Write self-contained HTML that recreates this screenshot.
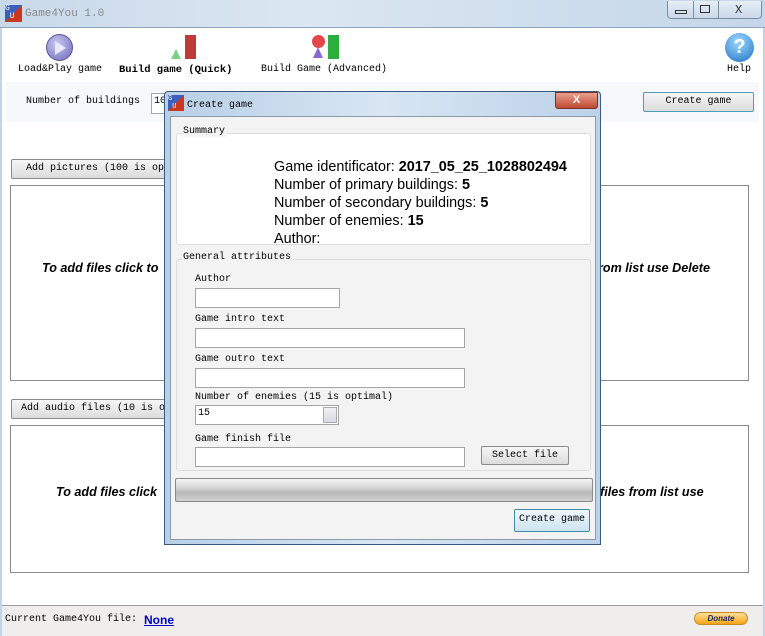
<!DOCTYPE html><html><head><style>
*{margin:0;padding:0;box-sizing:border-box}
body{width:765px;height:636px;position:relative;overflow:hidden;background:#fff;font-family:"Liberation Mono","Noto Sans CJK SC",monospace;font-size:10px;color:#000}
.a{position:absolute}
.btn{position:absolute;border:1px solid #8a8a8a;border-radius:2px;background:linear-gradient(#f6f6f6,#dcdcdc);text-align:center;line-height:18px}
.inp{position:absolute;background:#fff;border:1px solid #a5a5a5}
.it{font-family:"Liberation Sans",sans-serif;font-style:italic;font-weight:bold;font-size:12.6px}
.s{font-family:"Liberation Sans",sans-serif;font-size:14.4px;line-height:18px}
</style></head><body>
<div class="a" style="left:0;top:0;width:765px;height:28px;background:linear-gradient(90deg,#c9d9ea,#dbe7f2 40%,#c4d6e9);border-bottom:1px solid #8ea4bd"></div>
<div class="a" style="left:5px;top:5px;width:17px;height:17px;background:linear-gradient(135deg,#3a5fc0 50%,#c83a20 50%);color:#fff;font-size:8px;line-height:8px">G<br>&nbsp;U</div>
<div class="a" style="left:25px;top:8px;color:#8a8a8a;font-size:11px">Game4You 1.0</div>
<div class="a" style="left:667px;top:1px;width:95px;height:18px;border:1px solid #7b8ea4;border-top:none;border-radius:0 0 4px 4px;background:linear-gradient(#e6eef6,#c9d8e8)"></div>
<div class="a" style="left:693px;top:1px;width:1px;height:18px;background:#7b8ea4"></div>
<div class="a" style="left:718px;top:1px;width:1px;height:18px;background:#7b8ea4"></div>
<div class="a" style="left:675px;top:10px;width:12px;height:4px;border:1px solid #333"></div>
<div class="a" style="left:700px;top:5px;width:10px;height:8px;border:1px solid #333"></div>
<div class="a" style="left:735px;top:3px;font-size:12px;color:#333">X</div>
<div class="a" style="left:0;top:28px;width:2px;height:608px;background:#c4d4e6"></div>
<div class="a" style="left:763px;top:28px;width:2px;height:608px;background:#c4d4e6"></div>
<div class="a" style="left:46px;top:34px;width:27px;height:27px;border-radius:50%;background:radial-gradient(circle at 40% 35%,#c8c8f0,#6a6ab8);border:1px solid #5a5aa0"></div>
<div class="a" style="left:55px;top:41px;width:0;height:0;border-left:11px solid #e8e8ff;border-top:7px solid transparent;border-bottom:7px solid transparent"></div>
<div class="a" style="left:18px;top:64px">Load&amp;Play game</div>
<div class="a" style="left:171px;top:49px;width:0;height:0;border-left:5px solid transparent;border-right:5px solid transparent;border-bottom:10px solid #7dd08a"></div>
<div class="a" style="left:185px;top:35px;width:11px;height:24px;background:#c03a3a"></div>
<div class="a" style="left:119px;top:64px;font-weight:bold;font-size:10.5px">Build game (Quick)</div>
<div class="a" style="left:312px;top:35px;width:13px;height:13px;border-radius:50%;background:#e34848"></div>
<div class="a" style="left:313px;top:47px;width:0;height:0;border-left:5px solid transparent;border-right:5px solid transparent;border-bottom:11px solid #8a6ad0"></div>
<div class="a" style="left:328px;top:35px;width:11px;height:24px;background:#2cae3c"></div>
<div class="a" style="left:261px;top:64px">Build Game (Advanced)</div>
<div class="a" style="left:725px;top:33px;width:29px;height:29px;border-radius:50%;background:radial-gradient(circle at 45% 30%,#9fd8ff,#1d72c4);color:#fff;font:bold 20px 'Liberation Sans',sans-serif;text-align:center;line-height:29px">?</div>
<div class="a" style="left:727px;top:64px">Help</div>
<div class="a" style="left:6px;top:82px;width:753px;height:40px;background:#f6f8fb"></div>
<div class="a" style="left:26px;top:96px">Number of buildings</div>
<div class="inp" style="left:151px;top:93px;width:20px;height:21px;padding:2px">10</div>
<div class="btn" style="left:643px;top:92px;width:111px;height:20px;border-color:#4aa0b8">Create game</div>
<div class="btn" style="left:11px;top:159px;width:160px;height:20px;text-align:left;padding-left:14px">Add pictures (100 is op</div>
<div class="a" style="left:10px;top:185px;width:739px;height:196px;border:1px solid #8a8a8a"></div>
<div class="a it" style="left:42px;top:261px">To add files click to</div>
<div class="a it" style="left:598px;top:261px">rom list use Delete</div>
<div class="btn" style="left:11px;top:399px;width:160px;height:20px;text-align:left;padding-left:9px">Add audio files (10 is o</div>
<div class="a" style="left:10px;top:425px;width:739px;height:148px;border:1px solid #8a8a8a"></div>
<div class="a it" style="left:56px;top:485px">To add files click</div>
<div class="a it" style="left:600px;top:485px">files from list use</div>
<div class="a" style="left:2px;top:605px;width:761px;height:31px;background:#f0eeec;border-top:1px solid #9a9a9a"></div>
<div class="a" style="left:5px;top:614px">Current Game4You file:</div>
<div class="a" style="left:144px;top:613px;color:#0000cc;font:bold 12px 'Liberation Sans',sans-serif;text-decoration:underline">None</div>
<div class="a" style="left:694px;top:612px;width:54px;height:13px;border-radius:7px;background:linear-gradient(#ffe09a,#f7a417);border:1px solid #c98a20;font:bold italic 8px 'Liberation Sans',sans-serif;text-align:center;line-height:11px;color:#1a2a6a">Donate</div>
<div class="a" style="left:164px;top:91px;width:437px;height:454px;border:1px solid #3a5a80;background:linear-gradient(90deg,#b8cfe6,#d8e6f3 50%,#bcd2e8);border-radius:4px 4px 0 0"></div>
<div class="a" style="left:168px;top:95px;width:16px;height:16px;background:linear-gradient(135deg,#3a5fc0 50%,#c83a20 50%);color:#fff;font-size:7px;line-height:8px">G<br>&nbsp;U</div>
<div class="a" style="left:187px;top:100px">Create game</div>
<div class="a" style="left:555px;top:92px;width:43px;height:17px;border:1px solid #7a3030;border-radius:0 0 3px 3px;background:linear-gradient(#e8a090,#c04a30);color:#fff;text-align:center;font:bold 11px 'Liberation Sans',sans-serif;line-height:15px">X</div>
<div class="a" style="left:170px;top:116px;width:426px;height:424px;background:#f3f3f3;border:1px solid #8a9aaa"></div>
<div class="a" style="left:176px;top:133px;width:415px;height:112px;background:#fff;border:1px solid #dcdcdc;border-radius:3px"></div>
<div class="a" style="left:182px;top:126px;background:#f3f3f3;padding:0 1px">Summary</div>
<div class="a s" style="left:274px;top:158px">Game identificator: <b>2017_05_25_1028802494</b><br>Number of primary buildings: <b>5</b><br>Number of secondary buildings: <b>5</b><br>Number of enemies: <b>15</b><br>Author:</div>
<div class="a" style="left:176px;top:259px;width:415px;height:212px;border:1px solid #dcdcdc;border-radius:3px"></div>
<div class="a" style="left:182px;top:252px;background:#f3f3f3;padding:0 1px">General attributes</div>
<div class="a" style="left:195px;top:274px">Author</div>
<div class="inp" style="left:195px;top:288px;width:145px;height:20px"></div>
<div class="a" style="left:195px;top:314px">Game intro text</div>
<div class="inp" style="left:195px;top:328px;width:270px;height:20px"></div>
<div class="a" style="left:195px;top:354px">Game outro text</div>
<div class="inp" style="left:195px;top:368px;width:270px;height:20px"></div>
<div class="a" style="left:195px;top:392px">Number of enemies (15 is optimal)</div>
<div class="inp" style="left:195px;top:405px;width:144px;height:20px;padding:2px">15</div>
<div class="a" style="left:323px;top:407px;width:14px;height:16px;background:linear-gradient(#f0f0f0,#d8d8e8);border:1px solid #aaa"></div>
<div class="a" style="left:195px;top:434px">Game finish file</div>
<div class="inp" style="left:195px;top:447px;width:270px;height:20px"></div>
<div class="btn" style="left:481px;top:446px;width:88px;height:19px">Select file</div>
<div class="a" style="left:175px;top:478px;width:418px;height:24px;border:1px solid #8a8a8a;border-radius:2px;background:linear-gradient(#f4f4f4,#d6d6d6 40%,#b8b8b8 60%,#d0d0d0)"></div>
<div class="btn" style="left:514px;top:509px;width:76px;height:23px;line-height:20px;border-color:#3a8aa8;background:linear-gradient(#eef6fa,#cde4ef)">Create game</div>
</body></html>
